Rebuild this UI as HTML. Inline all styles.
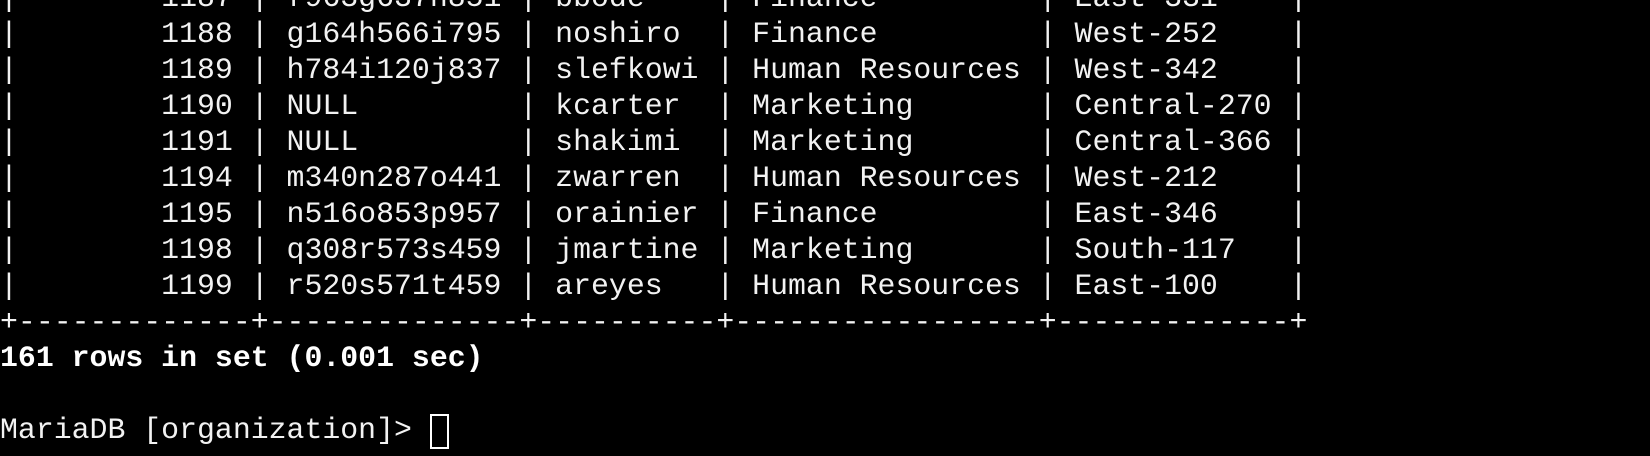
<!DOCTYPE html>
<html><head><meta charset="utf-8"><style>
html,body{margin:0;padding:0;background:#000;width:1650px;height:456px;overflow:hidden}
pre{position:absolute;left:0;top:-20px;margin:0;font-family:"Liberation Mono",monospace;font-size:29.85px;line-height:36px;color:#f2f2f2;white-space:pre}
b{color:#fff}
.cur{position:absolute;left:430px;top:414px;width:15px;height:31px;border:2px solid #fff}
</style></head><body>
<pre>|        1187 | f963g637h851 | bbode    | Finance         | East-331    |
|        1188 | g164h566i795 | noshiro  | Finance         | West-252    |
|        1189 | h784i120j837 | slefkowi | Human Resources | West-342    |
|        1190 | NULL         | kcarter  | Marketing       | Central-270 |
|        1191 | NULL         | shakimi  | Marketing       | Central-366 |
|        1194 | m340n287o441 | zwarren  | Human Resources | West-212    |
|        1195 | n516o853p957 | orainier | Finance         | East-346    |
|        1198 | q308r573s459 | jmartine | Marketing       | South-117   |
|        1199 | r520s571t459 | areyes   | Human Resources | East-100    |
+-------------+--------------+----------+-----------------+-------------+
<b>161 rows in set (0.001 sec)</b>

MariaDB [organization]> </pre>
<div class="cur"></div>
</body></html>
